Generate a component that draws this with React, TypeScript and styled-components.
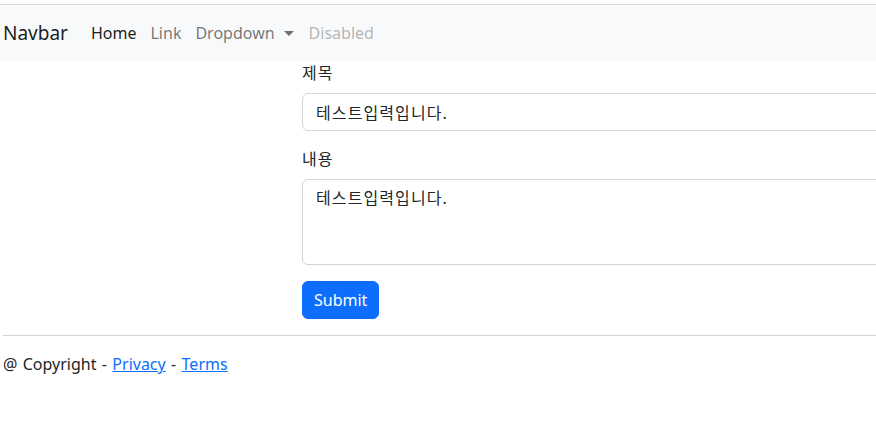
import React from "react";
import styled, { createGlobalStyle } from "styled-components";

const Global = createGlobalStyle`
  html, body { margin: 0; padding: 0; overflow: hidden; background: #fff; }
  body {
    font-family: "Noto Sans", "Noto Sans CJK KR", sans-serif;
    font-size: 16px;
    line-height: 1.5;
    color: #212529;
  }
  * { box-sizing: border-box; }
`;

const Page = styled.div`
  width: 876px;
  padding-top: 4px;
`;

const TopRule = styled.div`
  height: 1px;
  background: #dcdcdc;
`;

const Navbar = styled.nav`
  display: flex;
  align-items: center;
  background: #f8f9fa;
  padding: 8px 0 8px 3px;
  height: 56px;
`;

const Brand = styled.a`
  font-size: 19px;
  line-height: 30px;
  color: rgba(0, 0, 0, 0.9);
  text-decoration: none;
  margin-right: 16px;
`;

const NavList = styled.ul`
  display: flex;
  list-style: none;
  margin: 0;
  padding: 0;
`;

const NavLink = styled.a<{ $tone: "active" | "normal" | "disabled" }>`
  display: flex;
  align-items: center;
  padding: 8px 7px;
  text-decoration: none;
  color: ${(p) =>
    p.$tone === "active"
      ? "rgba(0,0,0,0.9)"
      : p.$tone === "disabled"
      ? "rgba(0,0,0,0.3)"
      : "rgba(0,0,0,0.55)"};
`;

const Caret = styled.span`
  display: inline-block;
  margin: 0 1px 0 9px;
  width: 0;
  height: 0;
  border-top: 5px solid rgba(0, 0, 0, 0.55);
  border-left: 5px solid transparent;
  border-right: 5px solid transparent;
`;

const Form = styled.form`
  margin-left: 302px;
  width: 900px;
`;

const Field = styled.div`
  margin-bottom: 16px;
`;

const Label = styled.label`
  display: block;
  margin-bottom: 8px;
  letter-spacing: 1px;
`;

const Input = styled.input`
  display: block;
  width: 100%;
  height: 38px;
  padding: 6px 12px 6px 13px;
  font: inherit;
  letter-spacing: 1.1px;
  color: #212529;
  border: 1px solid #ced4da;
  border-radius: 6px;
  background: #fff;
`;

const TextArea = styled.textarea`
  display: block;
  width: 100%;
  height: 86px;
  padding: 6px 12px 6px 13px;
  font: inherit;
  letter-spacing: 1.1px;
  color: #212529;
  border: 1px solid #ced4da;
  border-radius: 6px;
  resize: none;
`;

const Button = styled.button`
  font: inherit;
  color: #fff;
  background: #0d6efd;
  border: 1px solid #0d6efd;
  border-radius: 6px;
  padding: 6px 11px;
  height: 38px;
`;

const Rule = styled.hr`
  margin: 16px 0 16px 3px;
  border: 0;
  border-top: 1px solid #d3d3d3;
`;

const Footer = styled.footer`
  padding-left: 3px;
  word-spacing: 1.2px;
`;

const FooterLink = styled.a`
  color: #0d6efd;
  text-decoration: underline;
`;

export default function App() {
  return (
    <>
      <Global />
      <Page>
        <TopRule />
        <Navbar>
          <Brand href="#">Navbar</Brand>
          <NavList>
            <li><NavLink $tone="active" href="#">Home</NavLink></li>
            <li><NavLink $tone="normal" href="#">Link</NavLink></li>
            <li><NavLink $tone="normal" href="#">Dropdown<Caret /></NavLink></li>
            <li><NavLink $tone="disabled" href="#">Disabled</NavLink></li>
          </NavList>
        </Navbar>
        <Form onSubmit={(e) => e.preventDefault()}>
          <Field>
            <Label>제목</Label>
            <Input defaultValue="테스트입력입니다." />
          </Field>
          <Field>
            <Label>내용</Label>
            <TextArea defaultValue="테스트입력입니다." />
          </Field>
          <Button type="submit">Submit</Button>
        </Form>
        <Rule />
        <Footer>
          @ Copyright - <FooterLink href="#">Privacy</FooterLink> - <FooterLink href="#">Terms</FooterLink>
        </Footer>
      </Page>
    </>
  );
}
